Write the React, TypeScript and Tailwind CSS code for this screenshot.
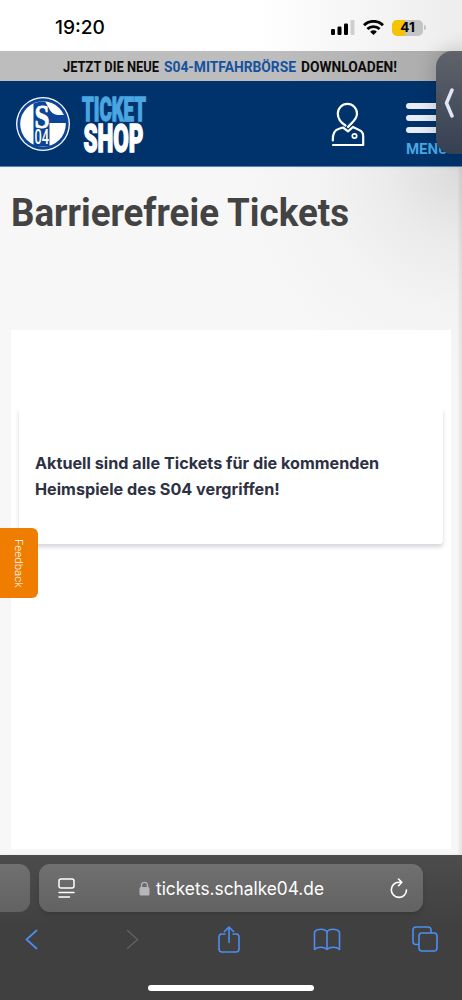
import React from 'react'

type TextProps = {
  text: string
  width: number
  className?: string
}

// Single line of condensed lettering, fitted to a fixed width
const FitText = ({ text, width, className }: TextProps) => (
  <svg width={width} height="1em" className={`block overflow-visible fill-current ${className ?? ''}`}>
    <text x="0" y="0.85em" textLength={width} lengthAdjust="spacingAndGlyphs">{text}</text>
  </svg>
)

const StatusBar = () => (
  <div className="flex h-[51px] shrink-0 items-center bg-linear-to-r from-white from-55% to-[#ededed] pt-1 pr-[36px] pl-[55px]">
    <FitText text="19:20" width={50} className="font-['Inter'] text-[18.5px] font-medium" />
    <div className="ml-auto flex items-center gap-[8px]">
      <svg width="24" height="15" viewBox="0 0 24 15">
        <rect x="0" y="9" width="4" height="6" rx="1.2" />
        <rect x="6.5" y="6.5" width="4" height="8.5" rx="1.2" />
        <rect x="13" y="3.5" width="4" height="11.5" rx="1.2" />
        <rect x="19.5" y="0" width="4" height="15" rx="1.2" fill="#cfcfcf" />
      </svg>
      <svg width="21" height="15" viewBox="0 0 21 15" fill="none" stroke="#000" strokeWidth="2.8">
        <path d="M1 5.2a13.6 13.6 0 0 1 19 0M4.4 9a8.8 8.8 0 0 1 12.2 0" />
        <path d="M10.5 15 7.2 11.7a4.7 4.7 0 0 1 6.6 0Z" fill="#000" stroke="none" />
      </svg>
      <div className="flex items-center gap-px">
        <div className="flex h-4 w-[31px] items-center justify-center rounded-[5px] bg-linear-to-r from-[#f5c400] from-42% to-[#c4c4c4] to-42% font-['Inter'] text-[13.5px] font-bold">41</div>
        <div className="h-[5px] w-[2px] rounded-r bg-[#c4c4c4]" />
      </div>
    </div>
  </div>
)

const Banner = () => (
  <div className="flex h-[30px] shrink-0 items-center justify-center gap-[5px] bg-linear-to-r from-[#bdbdbd] from-60% to-[#a9a9a9] pr-[2px] font-['Roboto'] text-[15px] font-bold text-[#0b0b0b]">
    <FitText text="JETZT DIE NEUE" width={96} />
    <FitText text="S04-MITFAHRBÖRSE" width={132} className="text-[#1452a0]" />
    <FitText text="DOWNLOADEN!" width={96} />
  </div>
)

const ClubLogo = () => (
  <svg width="56" height="56" viewBox="0 0 56 56">
    <circle cx="28" cy="28" r="27" fill="#fff" />
    <circle cx="28" cy="28" r="25.7" fill="#0c4595" />
    <circle cx="28" cy="28" r="22.8" fill="#fff" />
    <path d="M18.500 7.500 25 5.500h5L35.500 15q3 4 8 4h8v8h-17v23.500h-16Z" fill="#0c4595" />
    <text x="19.5" y="31.500" fill="#fff" stroke="#fff" strokeWidth="0.800" fontSize="33" fontFamily="Liberation Serif" fontWeight="bold" textLength="15" lengthAdjust="spacingAndGlyphs">S</text>
    <text x="19.5" y="48" fill="#fff" fontSize="20" fontFamily="Roboto" fontWeight="500" textLength="14.5" lengthAdjust="spacingAndGlyphs">04</text>
  </svg>
)

const Header = () => (
  <header className="flex h-[86px] shrink-0 border-b border-[#5b82ad] bg-[#00336b]">
    <div className="pt-[15px] pl-[15px]"><ClubLogo /></div>
    <svg width="66" height="60" viewBox="0 0 66 60" className="mt-[14px] ml-[10px] overflow-visible" fontFamily="Roboto" fontWeight="900">
      <text x="1" y="25.5" fontSize="33" fill="#4ba6e1" stroke="#4ba6e1" strokeWidth="1.300" textLength="64" lengthAdjust="spacingAndGlyphs">TICKET</text>
      <text x="2.5" y="56.500" fontSize="38.500" fill="#fff" stroke="#fff" strokeWidth="1.500" textLength="60" lengthAdjust="spacingAndGlyphs">SHOP</text>
    </svg>
    <svg width="34" height="46" viewBox="0 0 34 46" fill="none" stroke="#fff" strokeWidth="2.200" strokeLinecap="round" strokeLinejoin="round" className="mt-[21px] ml-[184px]">
      <path d="M14.500 23.500C10.500 21 6.800 17 6.800 11.500a9.600 9.600 0 0 1 19.200 0C26 18 20.500 20.500 17 25" />
      <path d="M1.800 38.500C1.500 31 3.500 28 8 26.800l4-1.300 5 3.800 5-4.300c4 2.500 10.200 2.800 10.200 9v9H2" />
      <circle cx="23.5" cy="34" r="2.2" strokeWidth="1.700" />
    </svg>
    <div className="mt-[22px] ml-[41px] flex flex-col gap-[6px] text-[#4ba6e1]">
      <div className="h-[6px] w-[42px] rounded-full bg-[#e9edf5]" />
      <div className="h-[6px] w-[42px] rounded-full bg-[#e9edf5]" />
      <div className="h-[6px] w-[42px] rounded-full bg-[#e9edf5]" />
      <FitText text="MENÜ" width={42} className="mt-[2px] font-['Roboto'] text-[15.5px] font-bold" />
    </div>
  </header>
)

const Content = () => (
  <main className="flex h-[688px] shrink-0 flex-col bg-[#f7f7f7] bg-[radial-gradient(circle_at_100%_0%,#dadada_0px,#ebebeb_75px,#f3f3f3_140px,#f7f7f7_230px)] px-[11px] shadow-[inset_-3px_0_3px_rgba(0,0,0,0.07)]">
    <h1 className="pt-[27px] text-[#434343]">
      <FitText text="Barrierefreie Tickets" width={338} className="font-['Roboto'] text-[38px] font-bold" />
    </h1>
    <section className="mt-[98px] h-[519px] bg-white px-2 pt-[77px]">
      <div className="h-[137px] rounded-[4px] bg-white px-4 pt-[43px] font-['Inter'] text-[16.2px] leading-[26px] font-bold text-[#2d3142] shadow-[0_3px_4px_rgba(45,49,80,0.2)]">
        <p>Aktuell sind alle Tickets für die kommenden</p>
        <p>Heimspiele des S04 vergriffen!</p>
      </div>
    </section>
  </main>
)

const BrowserBar = () => (
  <footer className="flex h-[145px] shrink-0 flex-col bg-linear-to-b from-[#4c4c4c] to-[#404040] to-50% pt-[9px]">
    <div className="flex h-12 gap-[9px] text-white">
      <div className="w-[30px] rounded-r-[11px] bg-linear-to-b from-[#707070] to-[#626262]" />
      <div className="flex w-[384px] items-center rounded-[11px] bg-linear-to-b from-[#707070] to-[#626262] pr-[15px] pl-[19px] shadow-md">
        <svg width="17" height="20" viewBox="0 0 17 20" fill="none" stroke="#fff" strokeWidth="1.5" strokeLinecap="round">
          <rect x="1" y="1" width="15" height="9" rx="2" />
          <path d="M1 14.500h15M1 19h10.500" />
        </svg>
        <svg width="11" height="15" viewBox="0 0 11 15" className="ml-[64px]">
          <rect x="0.5" y="6" width="10" height="8.5" rx="1.5" fill="#b5b5ba" />
          <path d="M2.500 7V4.300a3 3 0 0 1 6 0V7" fill="none" stroke="#b5b5ba" strokeWidth="1.3" />
        </svg>
        <FitText text="tickets.schalke04.de" width={168} className="mt-px ml-[6px] font-['Inter'] text-[18px]" />
        <svg width="18" height="21" viewBox="0 0 18 21" fill="none" stroke="#fff" strokeWidth="1.6" strokeLinecap="round" strokeLinejoin="round" className="ml-auto">
          <path d="M11.500 4.200H9A7.600 7.600 0 1 0 16.500 12M8.500 1l3.300 3.200-3.300 3.500" />
        </svg>
      </div>
    </div>
    <div className="flex h-[54px] items-center pl-[25px]">
      <svg width="13" height="21" viewBox="0 0 13 21" fill="none" stroke="#4c8df0" strokeWidth="1.7" strokeLinecap="round"><path d="M11.500 1.500 1.500 10.500l10 9" /></svg>
      <svg width="13" height="21" viewBox="0 0 13 21" fill="none" stroke="#606060" strokeWidth="1.5" strokeLinecap="round" className="ml-[88px]"><path d="m1.500 1.500 10 9-10 9" /></svg>
      <svg width="22" height="27" viewBox="0 0 22 27" fill="none" stroke="#4c8df0" strokeWidth="1.6" strokeLinecap="round" strokeLinejoin="round" className="ml-[79px]"><path d="M7 8H4a3 3 0 0 0-3 3v12a3 3 0 0 0 3 3h14a3 3 0 0 0 3-3V11a3 3 0 0 0-3-3h-3M11 16.500V1M6.500 5.500 11 1l4.500 4.500" /></svg>
      <svg width="28" height="23" viewBox="0 0 28 23" fill="none" stroke="#4c8df0" strokeWidth="1.6" strokeLinejoin="round" className="ml-[73px]"><path d="M14 4C12 .300 4 .300 1.500 4v17.500c3-3 9.500-3 12.500 0V4Zm0 0c2-3.700 10-3.700 12.500 0v17.500c-3-3-9.500-3-12.500 0" /></svg>
      <svg width="26" height="26" viewBox="0 0 26 26" fill="none" stroke="#4c8df0" strokeWidth="1.6" className="ml-[71px]"><path d="M7 18.500H4a3 3 0 0 1-3-3V4a3 3 0 0 1 3-3h12a3 3 0 0 1 3 3v3" /><rect x="7" y="7" width="18" height="18" rx="3" /></svg>
    </div>
    <div className="mx-auto mt-[19px] h-[6px] w-[166px] rounded-full bg-white" />
  </footer>
)

const App = () => (
  <div className="relative flex h-[1000px] w-[462px] flex-col overflow-hidden bg-white">
    <StatusBar />
    <Banner />
    <Header />
    <Content />
    <BrowserBar />
    <button type="button" className="absolute top-[528px] left-0 flex h-[70px] w-[38px] items-center justify-center rounded-r-[6px] bg-[#ef7d00] pr-[2px] text-white">
      <span className="font-['Roboto'] text-[11.5px] font-light [writing-mode:vertical-rl]">Feedback</span>
    </button>
    <div className="absolute top-[51px] left-[436px] flex h-[103px] w-[40px] rounded-l-[16px] bg-linear-to-b from-[#60636a] to-[#354052] shadow-[0_0_20px_rgba(0,0,0,0.2)]">
      <svg width="10" height="30" viewBox="0 0 10 30" fill="none" stroke="#dfe7f5" strokeWidth="3.500" strokeLinecap="round" strokeLinejoin="round" className="mt-[37px] ml-[8px]"><path d="M8 2 2.500 15 8 28" /></svg>
    </div>
  </div>
)

export default App
